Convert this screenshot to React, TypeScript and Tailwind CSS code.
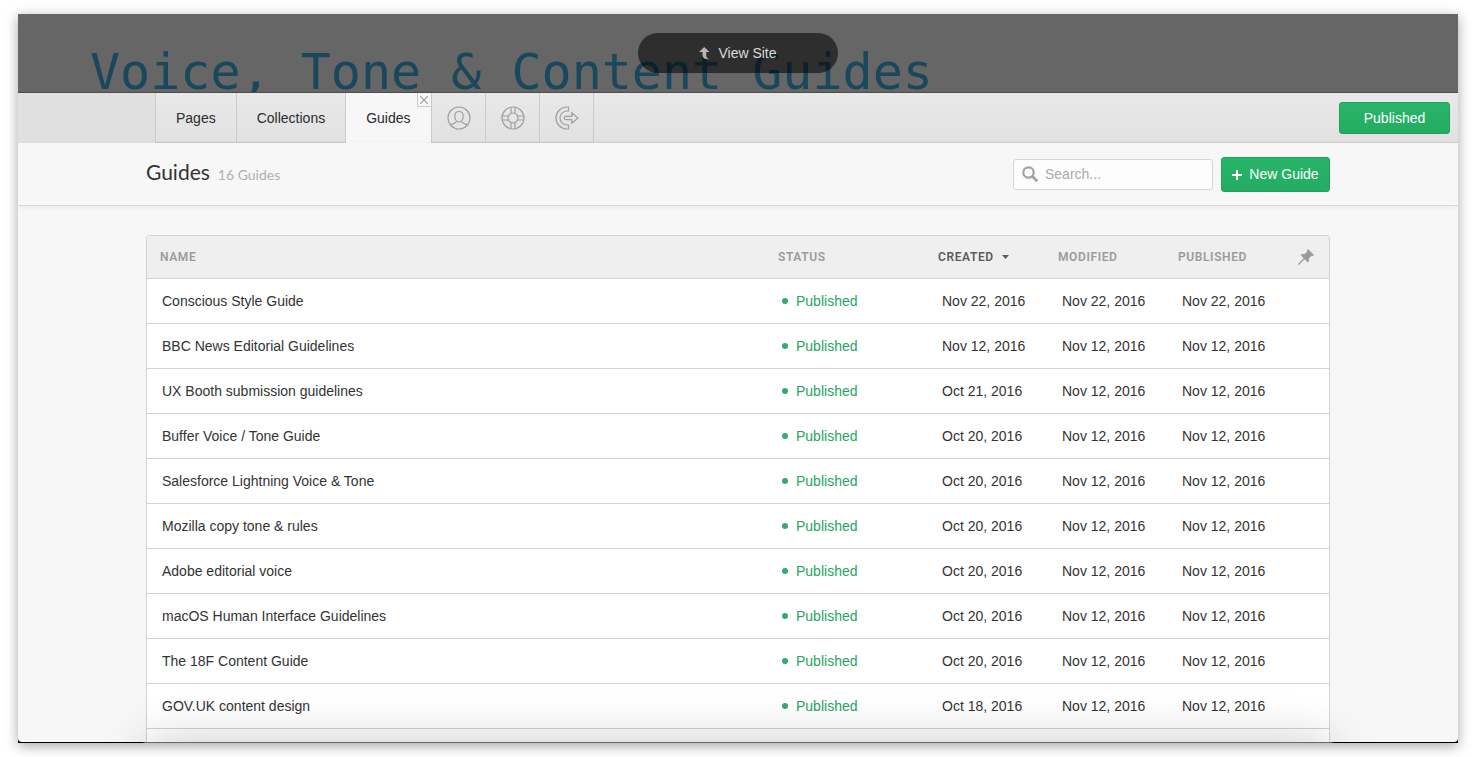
import { useState } from 'react'

type Guide = { name: string; created: string; modified: string; published: string }

const GUIDES: Guide[] = [
  { name: 'Conscious Style Guide',          created: 'Nov 22, 2016', modified: 'Nov 22, 2016', published: 'Nov 22, 2016' },
  { name: 'BBC News Editorial Guidelines',  created: 'Nov 12, 2016', modified: 'Nov 12, 2016', published: 'Nov 12, 2016' },
  { name: 'UX Booth submission guidelines', created: 'Oct 21, 2016', modified: 'Nov 12, 2016', published: 'Nov 12, 2016' },
  { name: 'Buffer Voice / Tone Guide',      created: 'Oct 20, 2016', modified: 'Nov 12, 2016', published: 'Nov 12, 2016' },
  { name: 'Salesforce Lightning Voice & Tone', created: 'Oct 20, 2016', modified: 'Nov 12, 2016', published: 'Nov 12, 2016' },
  { name: 'Mozilla copy tone & rules',      created: 'Oct 20, 2016', modified: 'Nov 12, 2016', published: 'Nov 12, 2016' },
  { name: 'Adobe editorial voice',          created: 'Oct 20, 2016', modified: 'Nov 12, 2016', published: 'Nov 12, 2016' },
  { name: 'macOS Human Interface Guidelines', created: 'Oct 20, 2016', modified: 'Nov 12, 2016', published: 'Nov 12, 2016' },
  { name: 'The 18F Content Guide',          created: 'Oct 20, 2016', modified: 'Nov 12, 2016', published: 'Nov 12, 2016' },
  { name: 'GOV.UK content design',          created: 'Oct 18, 2016', modified: 'Nov 12, 2016', published: 'Nov 12, 2016' },
]

function UserIcon() {
  return (
    <svg width="24" height="24" viewBox="0 0 24 24" fill="none" stroke="#a0a0a0" strokeWidth="1.2">
      <circle cx="12" cy="12" r="11" />
      <path d="M12 5.500c-2.700 0-4.200 1.700-4.200 4.500 0 3.400 1.700 6 4.200 6s4.200-2.600 4.200-6c0-2.800-1.500-4.500-4.200-4.500z" />
      <path d="M9.600 15.200c-.3 1.300-1 1.700-2.600 2.100-1.400.4-2.500.9-3.200 1.900M14.400 15.200c.3 1.300 1 1.700 2.600 2.100 1.400.4 2.500.9 3.200 1.900" />
    </svg>
  )
}

function HelpIcon() {
  return (
    <svg width="24" height="24" viewBox="0 0 24 24" fill="none" stroke="#a0a0a0" strokeWidth="1.2">
      <circle cx="12" cy="12" r="11" />
      <circle cx="12" cy="12" r="5" />
      <path d="M10 1.200v6.200M14 1.200v6.200M10 16.600v6.200M14 16.600v6.200M1.200 10h6.200M1.200 14h6.200M16.600 10h6.200M16.600 14h6.200" />
    </svg>
  )
}

function ExitIcon() {
  return (
    <svg width="24" height="24" viewBox="0 0 24 24" fill="none" stroke="#a0a0a0" strokeWidth="1.2">
      <path d="M13.500 1H12a11 11 0 0 0 0 22h1.500v-4H12a7 7 0 0 1 0-14h1.500z" />
      <path d="M11 10.300h5.800V6.700l6.200 5.300-6.200 5.300v-3.600H11a1.700 1.700 0 0 1 0-3.400z" />
    </svg>
  )
}

function PinIcon() {
  return (
    <svg width="16" height="16" viewBox="0 0 16 16" fill="#9b9b9b">
      <path d="M10 0l6 6-1.200 1-1.100-.3-2.900 2.900c.4 1.500.1 2.900-.9 3.900L6.600 10.200 1 16l-1-.9 5.700-5.900L2.500 6.100c1-1 2.500-1.300 3.900-.9l2.900-2.900L9 1.200z" />
    </svg>
  )
}

function SearchIcon() {
  return (
    <svg width="16" height="16" viewBox="0 0 16 16" fill="none" stroke="#a3a3a3" strokeWidth="2.2">
      <circle cx="6.5" cy="6.5" r="5.2" />
      <path d="M10.300 10.300l5 5" strokeWidth="2.8" />
    </svg>
  )
}

const TABS = ['Pages', 'Collections', 'Guides']

const ICON_TABS = [
  { label: 'Account', Icon: UserIcon },
  { label: 'Help',    Icon: HelpIcon },
  { label: 'Log out', Icon: ExitIcon },
]

function Toolbar() {
  const [tab, setTab] = useState('Guides')

  return (
    <nav className="flex h-[50px] shrink-0 bg-linear-to-b from-[#e9e9e9] to-[#e1e1e1]">
      <div className="w-[137px] shrink-0 bg-[#e0e0e0]" />
      <div className="flex border-l border-[#cbcbcb]">
        {TABS.map(t => (
          <div
            key={t}
            className={
              tab === t
                ? 'relative border-r border-[#cbcbcb] bg-[#f7f7f7]'
                : 'relative border-r border-b border-[#cbcbcb] pt-px'
            }
          >
            <button onClick={() => setTab(t)} className="h-full px-5 text-[14px] text-[#2b2b2b]">
              {t}
            </button>
            {tab === t && (
              <button
                aria-label="Close tab"
                className="absolute top-0 right-0 flex size-[14px] items-center justify-center rounded-bl-xs border-b border-l border-[#cbcbcb]"
              >
                <svg width="8" height="8" viewBox="0 0 8 8" stroke="#a0a0a0" strokeWidth="1.2">
                  <path d="M0 0l8 8M8 0L0 8" />
                </svg>
              </button>
            )}
          </div>
        ))}
        {ICON_TABS.map(({ label, Icon }) => (
          <button
            key={label}
            aria-label={label}
            className="flex w-[54px] items-center justify-center border-r border-b border-[#cbcbcb] pl-px"
          >
            <Icon />
          </button>
        ))}
      </div>
      <div className="flex flex-1 items-center justify-end border-b border-[#d2d2d2] pr-2">
        <button className="h-8 w-[111px] rounded-[3px] border border-[#20a25d] bg-linear-to-b from-[#28b469] to-[#23ad63] pt-px text-[14px] font-medium text-white">
          Published
        </button>
      </div>
    </nav>
  )
}

function Heading() {
  return (
    <div className="z-10 flex h-[63px] shrink-0 items-center border-b border-[#d9d9d9] bg-[#f7f7f7] px-32 shadow-[0_1px_6px_rgba(0,0,0,0.06)]">
      <div className="flex flex-1 items-baseline gap-2 pb-1 font-['Lato',sans-serif]">
        <h1 className="text-[21px] leading-6 text-[#333]">Guides</h1>
        <span className="text-[14px] text-[#b0b0b0]">16 Guides</span>
      </div>
      <div className="flex items-center gap-2">
        <label className="flex h-[31px] w-[200px] items-center gap-[7px] rounded-[3px] border border-[#d5d5d5] bg-[#fdfdfd] pl-2">
          <SearchIcon />
          <input
            type="text"
            aria-label="Search guides"
            placeholder="Search..."
            className="min-w-0 flex-1 bg-transparent text-[14px] outline-none placeholder:text-[#a9a9a9]"
          />
        </label>
        <button className="flex h-[35px] w-[109px] items-center justify-center gap-[7px] rounded-[3px] border border-[#20a25d] bg-linear-to-b from-[#28b469] to-[#23ad63] pt-px text-[14px] font-medium text-white">
          <svg width="10" height="10" viewBox="0 0 10 10" stroke="white" strokeWidth="2">
            <path d="M5 0v10M0 5h10" />
          </svg>
          New Guide
        </button>
      </div>
    </div>
  )
}

function GuideTable() {
  return (
    <div className="overflow-hidden rounded-t-[4px] border border-b-0 border-[#d3d3d3] bg-white">
      <table className="w-full table-fixed border-collapse text-left">
        <colgroup>
          <col />
          <col className="w-40" />
          <col className="w-[120px]" />
          <col className="w-[120px]" />
          <col className="w-[120px]" />
          <col className="w-[47px]" />
        </colgroup>
        <thead className="bg-[#efefef] font-['Roboto',sans-serif] text-[12px] tracking-wider text-[#9b9b9b]">
          <tr className="h-[42px] border-b border-[#d3d3d3]">
            <th className="pl-[13px] font-semibold">NAME</th>
            <th className="pl-4 font-semibold">STATUS</th>
            <th className="pl-4 font-semibold text-[#5b5b5b]" aria-sort="descending">
              <span className="flex items-center gap-2">
                CREATED
                <svg width="7" height="4" viewBox="0 0 7 4" fill="#5b5b5b"><path d="M0 0h7L3.500 4z" /></svg>
              </span>
            </th>
            <th className="pl-4 font-semibold">MODIFIED</th>
            <th className="pl-4 font-semibold">PUBLISHED</th>
            <th className="pl-4" aria-label="Pinned"><PinIcon /></th>
          </tr>
        </thead>
        <tbody className="text-[14px] text-[#333]">
          {GUIDES.map(g => (
            <tr key={g.name} className="h-[45px] border-b border-[#d3d3d3]">
              <td className="pt-px pl-[15px]">{g.name}</td>
              <td className="pt-px pl-5 text-[#27a561]">
                <span className="flex items-center gap-2">
                  <span className="size-[6px] rounded-full bg-[#32ac69]" />
                  Published
                </span>
              </td>
              <td className="pt-px pl-5">{g.created}</td>
              <td className="pt-px pl-5">{g.modified}</td>
              <td className="pt-px pl-5">{g.published}</td>
              <td />
            </tr>
          ))}
          <tr className="h-[45px]"><td colSpan={6} /></tr>
        </tbody>
      </table>
    </div>
  )
}

export default function App() {
  return (
    <div className="h-screen overflow-hidden bg-white pt-[14px] pr-[17px] pb-[14px] pl-[18px] font-['Liberation_Sans',Arial,sans-serif]">
      <div className="h-full bg-[linear-gradient(90deg,#000_124px,#5d6b65_128px,#5d6b65_calc(100%-128px),#000_calc(100%-124px))] pb-px shadow-[0_3px_12px_rgba(0,0,0,0.35)]">
        <div className="flex h-full flex-col overflow-hidden rounded-b-[4px] bg-[#f7f7f7]">
          <header className="relative h-[79px] shrink-0 overflow-hidden border-b border-[#4c4c4c] bg-[#666]">
            <div className="pt-[29px] pl-[72px] font-['DejaVu_Sans_Mono',monospace] text-[50px] leading-[58px] whitespace-nowrap text-[#19475b]">
              Voice, Tone &amp; Content Guides
            </div>
            <a
              href="#site"
              className="absolute top-[19px] left-1/2 flex h-10 w-[200px] -translate-x-1/2 items-center justify-center gap-2 rounded-full bg-black/55 text-[14px] text-[#dcdcdc]"
            >
              <svg width="11" height="13" viewBox="0 0 11 13" fill="#b5b5b5">
                <path d="M5.200 0L10.500 5H7.300v3.200c0 2 .8 3.200 2.900 4C5.900 12.500 3.500 11 3.500 8V5H0z" />
              </svg>
              View Site
            </a>
          </header>
          <Toolbar />
          <Heading />
          <main className="relative min-h-0 flex-1 overflow-hidden px-32 pt-[29px]">
            <GuideTable />
            <div className="pointer-events-none absolute inset-x-32 top-full h-10 shadow-[0_0_48px_rgba(0,0,0,0.22)]" />
          </main>
        </div>
      </div>
    </div>
  )
}
